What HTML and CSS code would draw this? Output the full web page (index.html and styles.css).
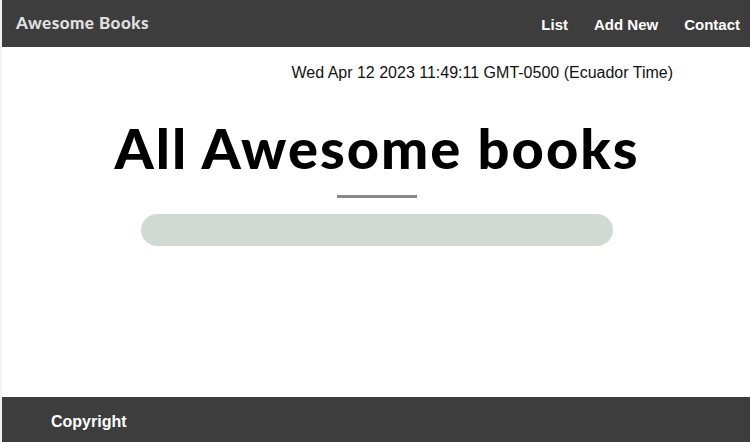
FILE: index.html
```html
<!DOCTYPE html>
<html lang="en">
<head>
<meta charset="utf-8">
<title>Awesome Books</title>
<link rel="stylesheet" href="styles.css">
</head>
<body>
<div class="page">
  <header class="topbar">
    <span class="logo">Awesome Books</span>
    <nav class="nav">
      <a href="#">List</a>
      <a href="#">Add New</a>
      <a href="#">Contact</a>
    </nav>
  </header>
  <main class="main">
    <p class="date">Wed Apr 12 2023 11:49:11 GMT-0500 (Ecuador Time)</p>
    <h1 class="title">All Awesome books</h1>
    <div class="rule"></div>
    <div class="list"></div>
  </main>
  <footer class="footer">
    <span class="copy">Copyright</span>
  </footer>
</div>
</body>
</html>
```

FILE: styles.css
```css
html, body {
  margin: 0;
  padding: 0;
  height: 100%;
}
body {
  background: #f2f2f2;
  padding-left: 2px;
  box-sizing: border-box;
  overflow: hidden;
  font-family: "Liberation Sans", Arial, sans-serif;
}
.page {
  background: #fff;
  height: 100%;
  display: flex;
  flex-direction: column;
}
.topbar {
  height: 47px;
  background: #3d3d3d;
  display: flex;
  align-items: center;
  justify-content: space-between;
  padding: 0 10px 0 14px;
  flex-shrink: 0;
}
.logo {
  font-family: Lato, sans-serif;
  font-weight: 900;
  font-size: 17px;
  letter-spacing: 0.5px;
  color: #e0e0e0;
  margin-top: -2px;
}
.nav {
  display: flex;
  gap: 26px;
  margin-top: 2px;
}
.nav a {
  color: #fff;
  text-decoration: none;
  font-weight: bold;
  font-size: 15px;
}
.main {
  flex: 1;
  display: flex;
  flex-direction: column;
  align-items: center;
  padding-left: 2px;
}
.date {
  align-self: flex-end;
  margin: 17px 77px 0 0;
  font-size: 16px;
  color: #111;
}
.title {
  font-family: Lato, sans-serif;
  font-weight: 900;
  font-size: 56px;
  letter-spacing: 2px;
  margin: 32px 0 0;
  line-height: 1.2;
  color: #000;
}
.rule {
  width: 80px;
  height: 3px;
  background: #888;
  margin-top: 14px;
}
.list {
  width: 472px;
  height: 32px;
  border-radius: 16px;
  background: #d0d9d4;
  margin-top: 16px;
}
.footer {
  height: 45px;
  background: #3d3d3d;
  display: flex;
  align-items: center;
  padding: 5px 0 0 49px;
  box-sizing: border-box;
  flex-shrink: 0;
}
.copy {
  color: #fff;
  font-weight: bold;
  font-size: 16px;
}
```
